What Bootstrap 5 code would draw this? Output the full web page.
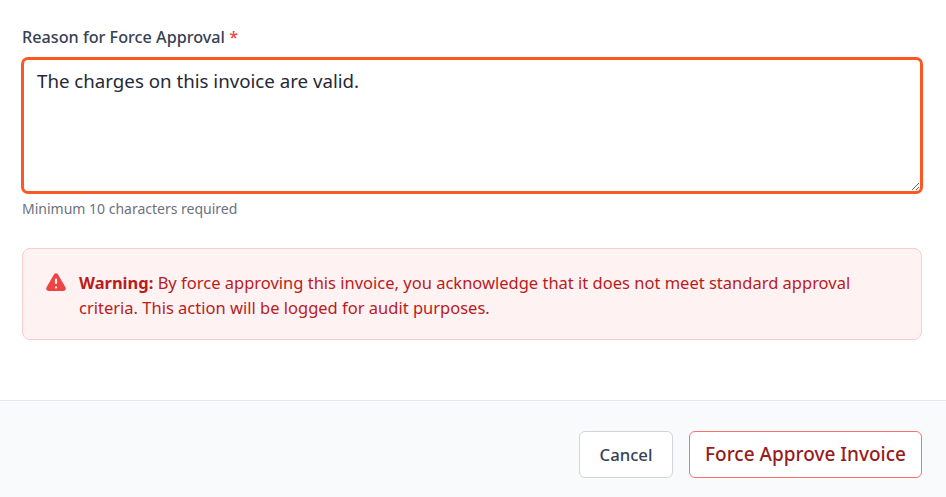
<!DOCTYPE html>
<html>

<head>
  <link href="https://cdn.jsdelivr.net/npm/bootstrap@5.3.2/dist/css/bootstrap.min.css" rel="stylesheet"
    type="text/css" />
  <style>
    body {
      font-family: "Noto Sans", sans-serif;
      background: #fff;
      height: 497px;
      overflow: hidden;
    }

    .modal-main {
      height: 400px;
      padding: 26px 24px 0 22px;
    }

    .reason-label {
      font-size: 16.2px;
      line-height: 22px;
      font-weight: 500;
      color: #374151;
      margin-bottom: 10px;
    }

    .reason-label span {
      color: #ef4444;
    }

    .reason-input {
      height: 135px;
      padding: 7px 13px;
      font-size: 18.7px;
      line-height: 28px;
      color: #1f2937;
      border: 2px solid #ff5722;
      border-radius: 6px;
      box-shadow: 0 0 0 1px #ff5722;
      resize: vertical;
    }

    .reason-input:focus {
      border-color: #ff5722;
      box-shadow: 0 0 0 1px #ff5722;
    }

    .reason-hint {
      font-size: 14px;
      line-height: 18px;
      color: #6b7280;
      margin-top: 7px;
    }

    .warn-box {
      margin-top: 30px;
      height: 92px;
      padding: 21px 24px 0 22px;
      background: #fef2f2;
      border: 1px solid #fecaca;
      border-radius: 8px;
      color: #b91c1c;
      font-size: 16.5px;
      line-height: 25px;
    }

    .warn-box svg {
      flex-shrink: 0;
      margin-top: 2px;
    }

    .warn-box strong {
      font-weight: 700;
    }

    .foot-bar {
      height: 97px;
      padding: 30px 24px 0 0;
      background: #f9fafb;
      border-top: 1px solid #e5e7eb;
    }

    .foot-btn {
      height: 47px;
      font-weight: 500;
      border-radius: 6px;
      background: #fff;
      padding: 0 12px;
    }

    .btn-cancel {
      width: 94px;
      font-size: 16.7px;
      color: #374151;
      border: 1px solid #d1d5db;
    }

    .btn-force {
      width: 233px;
      font-size: 19px;
      color: #991b1b;
      border: 1px solid #f87171;
      white-space: nowrap;
    }
  </style>
  <script src="https://cdn.jsdelivr.net/npm/bootstrap@5.3.2/dist/js/bootstrap.bundle.min.js"></script>
</head>

<body>

  <div class="modal-main">
    <label class="form-label d-block reason-label" for="reason">Reason for Force Approval <span>*</span></label>
    <textarea id="reason" class="form-control reason-input">The charges on this invoice are valid.</textarea>
    <div class="reason-hint">Minimum 10 characters required</div>

    <div class="d-flex warn-box">
      <svg width="22" height="22" viewBox="0 0 20 20" fill="#ef4444" class="me-2">
        <path fill-rule="evenodd" clip-rule="evenodd"
          d="M8.26 2.1c.77-1.33 2.7-1.33 3.47 0l6.96 12.1c.76 1.33-.2 3-1.74 3H3.05c-1.54 0-2.5-1.67-1.74-3L8.26 2.1zM11 14a1 1 0 1 1-2 0 1 1 0 0 1 2 0zm-1-8a1 1 0 0 0-1 1v3a1 1 0 1 0 2 0V7a1 1 0 0 0-1-1z" />
      </svg>
      <div class="warn-text ms-1"><strong>Warning:</strong> By force approving this invoice, you acknowledge that it does
        not meet standard approval<br>criteria. This action will be logged for audit purposes.</div>
    </div>
  </div>

  <div class="d-flex justify-content-end gap-3 foot-bar">
    <button type="button" class="btn foot-btn btn-cancel">Cancel</button>
    <button type="button" class="btn foot-btn btn-force">Force Approve Invoice</button>
  </div>

</body>

</html>
